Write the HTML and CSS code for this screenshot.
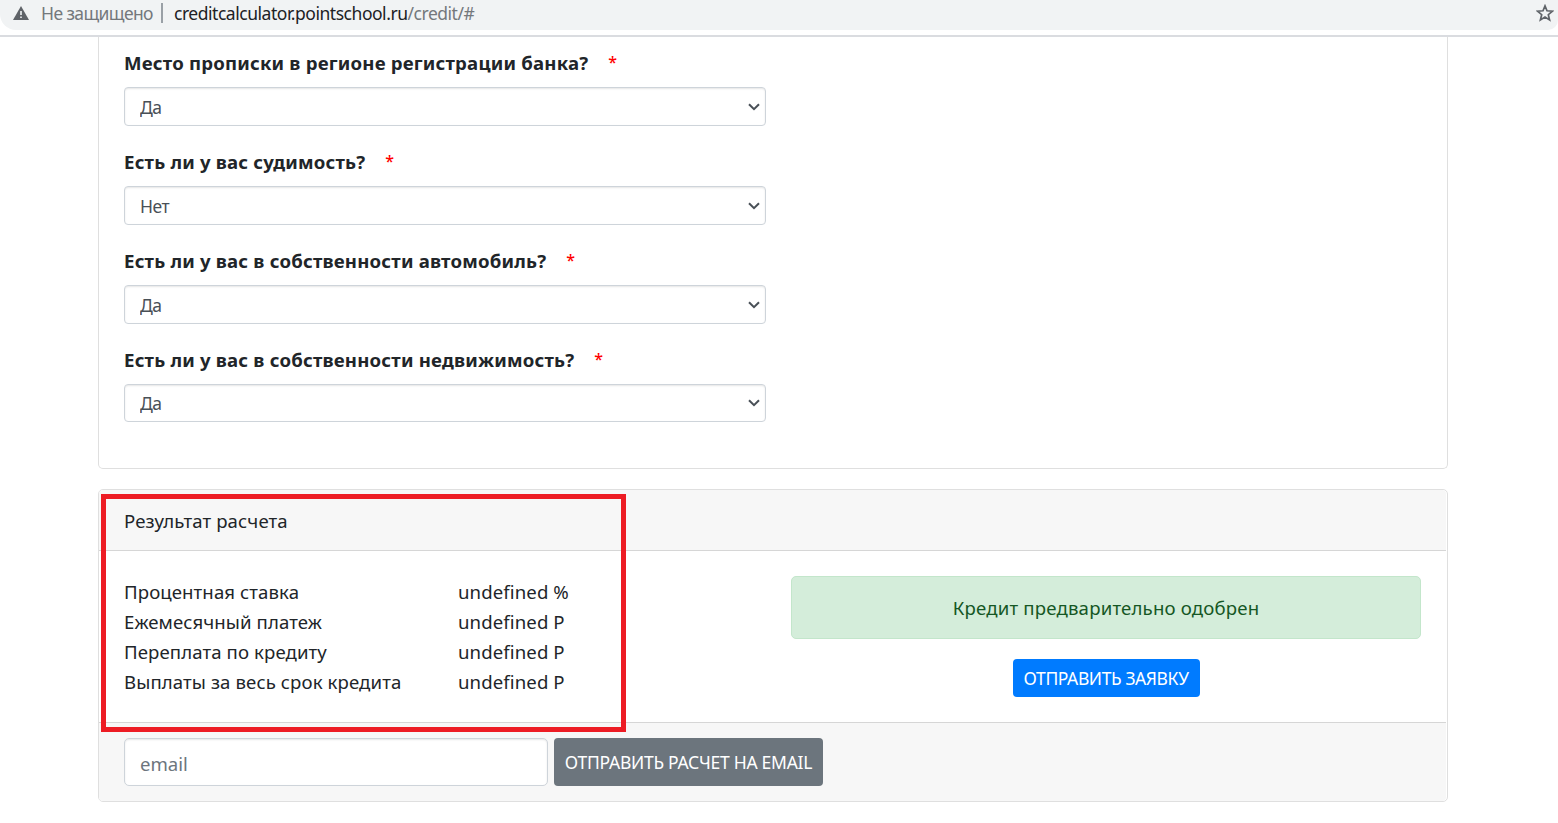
FILE: index.html
```html
<!DOCTYPE html>
<html lang="ru">
<head>
<meta charset="utf-8">
<title>Кредитный калькулятор</title>
<link rel="stylesheet" href="styles.css">
</head>
<body>
<header class="browser">
  <div class="address">
    <svg class="warn" viewBox="0 0 16 14"><path d="M8 0 16 14H0Z" fill="#5f6368"/><path d="M7.2 5h1.6v4H7.2zM7.2 10.4h1.6V12H7.2z" fill="#f1f3f4"/></svg>
    <span class="insecure">Не защищено</span>
    <span class="divider"></span>
    <span class="url"><span class="host">creditcalculator.pointschool.ru</span><span class="path">/credit/#</span></span>
    <svg class="star" viewBox="0 0 18 18"><path d="M9 1.9 11 6.8 16.4 7.2 12.3 10.7 13.6 16 9 13.1 4.4 16 5.7 10.7 1.6 7.2 7 6.8Z" fill="none" stroke="#5f6368" stroke-width="1.7"/></svg>
  </div>
</header>
<main class="page">
  <section class="card questions">
    <div class="group">
      <label class="label" for="q1"><span>Место прописки в регионе регистрации банка?</span><span class="required">*</span></label>
      <div class="select"><select id="q1"><option>Да</option></select><svg class="chevron" viewBox="0 0 12 8"><path d="M1 1.2 6 6.2 11 1.2"/></svg></div>
    </div>
    <div class="group">
      <label class="label" for="q2"><span>Есть ли у вас судимость?</span><span class="required">*</span></label>
      <div class="select"><select id="q2"><option>Нет</option></select><svg class="chevron" viewBox="0 0 12 8"><path d="M1 1.2 6 6.2 11 1.2"/></svg></div>
    </div>
    <div class="group">
      <label class="label" for="q3"><span>Есть ли у вас в собственности автомобиль?</span><span class="required">*</span></label>
      <div class="select"><select id="q3"><option>Да</option></select><svg class="chevron" viewBox="0 0 12 8"><path d="M1 1.2 6 6.2 11 1.2"/></svg></div>
    </div>
    <div class="group last">
      <label class="label" for="q4"><span>Есть ли у вас в собственности недвижимость?</span><span class="required">*</span></label>
      <div class="select"><select id="q4"><option>Да</option></select><svg class="chevron" viewBox="0 0 12 8"><path d="M1 1.2 6 6.2 11 1.2"/></svg></div>
    </div>
  </section>
  <section class="card result">
    <div class="card-header"><span class="title">Результат расчета</span></div>
    <div class="card-body">
      <dl class="figures">
        <dt>Процентная ставка</dt><dd>undefined %</dd>
        <dt>Ежемесячный платеж</dt><dd>undefined P</dd>
        <dt>Переплата по кредиту</dt><dd>undefined P</dd>
        <dt>Выплаты за весь срок кредита</dt><dd>undefined P</dd>
      </dl>
      <div class="decision">
        <div class="alert">Кредит предварительно одобрен</div>
        <button class="btn primary" type="button">ОТПРАВИТЬ ЗАЯВКУ</button>
      </div>
    </div>
    <div class="card-footer">
      <input class="email" type="email" placeholder="email">
      <button class="btn secondary" type="button">ОТПРАВИТЬ РАСЧЕТ НА EMAIL</button>
    </div>
    <div class="highlight"></div>
  </section>
</main>
</body>
</html>
```
FILE: styles.css
```css
* { box-sizing: border-box; }
body {
  margin: 0;
  height: 823px;
  overflow: hidden;
  background: #fff;
  color: #212529;
  font-family: "Noto Sans", "Open Sans", sans-serif;
  font-size: 18.6px;
  line-height: 30px;
}
.browser { height: 37px; border-bottom: 2px solid #dadce0; }
.address {
  display: flex;
  align-items: center;
  height: 30px;
  padding: 0 4px 4px 13px;
  background: #f1f3f4;
  border-radius: 0 0 10px 16px;
  color: #74787c;
  font-size: 17.5px;
}
.warn { width: 16px; height: 14px; margin-right: 12px; }
.insecure { width: 112px; white-space: nowrap; letter-spacing: -.6px; }
.divider { width: 2px; height: 20px; margin: 0 11px 0 8px; background: #9aa0a6; }
.url { white-space: nowrap; letter-spacing: -.47px; }
.host { color: #202124; }
.star { width: 18px; height: 18px; margin-left: auto; }
.page { padding: 0 110px 0 98px; }
.card { border: 1px solid #dfdfdf; border-radius: 5px; }
.questions {
  display: flex;
  flex-direction: column;
  gap: 21px;
  height: 432px;
  padding: 11px 25px 0;
  border-top: 0;
  border-radius: 0 0 5px 5px;
}
.group { width: 642px; }
.label { display: flex; gap: 20px; height: 39px; font-weight: 700; letter-spacing: .2px; white-space: nowrap; }
.required { color: #f00; font-size: 16px; font-weight: 500; line-height: 28px; }
.select { display: grid; }
.select > * { grid-area: 1 / 1; }
.select select {
  appearance: none;
  width: 642px;
  height: 39px;
  padding: 0 15px;
  border: 1px solid #ced4da;
  border-radius: 4px;
  background: #fff;
  box-shadow: inset 0 1px 2px rgba(0, 0, 0, .1);
  color: #495057;
  font: inherit;
  font-size: 17.5px;
  letter-spacing: -.5px;
}
.group.last select { height: 38px; }
.chevron {
  justify-self: end;
  align-self: center;
  width: 12px;
  height: 8px;
  margin-right: 6px;
  fill: none;
  stroke: #495057;
  stroke-width: 2;
}
.result { position: relative; height: 313px; margin-top: 20px; }
.card-header, .card-footer { margin-right: 1px; background: #f7f7f7; }
.card-header { height: 61px; padding: 16px 25px 0; border-bottom: 1px solid #d6d6d6; border-radius: 4px 4px 0 0; }
.title { letter-spacing: .12px; }
.card-body { display: flex; justify-content: space-between; height: 171px; padding: 25px 26px 0 25px; }
.figures { display: grid; grid-template-columns: 334px auto; grid-auto-rows: 30px; align-content: start; margin: 1px 0 0; }
.figures dt, .figures dd { margin: 0; white-space: nowrap; letter-spacing: .1px; }
.decision { display: flex; flex-direction: column; align-items: center; gap: 20px; width: 630px; }
.alert {
  width: 100%;
  height: 63px;
  padding-top: 16px;
  border: 1px solid #c3e6cb;
  border-radius: 5px;
  background: #d4edda;
  color: #155724;
  letter-spacing: .19px;
  text-align: center;
}
.btn { border: 0; border-radius: 4px; padding: 0; color: #fff; font: inherit; font-size: 17.5px; white-space: nowrap; }
.primary { width: 187px; height: 38px; background: #007bff; letter-spacing: -.4px; }
.secondary { width: 269px; height: 48px; background: #6c757d; letter-spacing: -.27px; }
.card-footer { display: flex; gap: 6px; height: 79px; padding: 15px 25px; border-top: 1px solid #d6d6d6; border-radius: 0 0 4px 4px; }
.email {
  width: 424px;
  height: 48px;
  padding: 3px 15px 0;
  border: 1px solid #ced4da;
  border-radius: 5px;
  background: #fff;
  box-shadow: inset 0 1px 2px rgba(0, 0, 0, .1);
  font: inherit;
}
.email::placeholder { color: #6c757d; opacity: 1; }
.highlight { position: absolute; left: 2px; top: 4px; width: 525px; height: 238px; border: 5px solid #ed1c24; }
```
